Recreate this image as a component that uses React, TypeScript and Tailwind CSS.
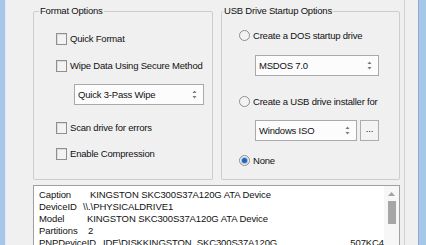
import React from 'react';

const font = { fontFamily: '"Liberation Sans", Arial, sans-serif' };

function UpDown() {
  return (
    <svg width="5" height="9" viewBox="0 0 5 9" className="shrink-0">
      <path d="M2.5 0.5 L4.5 3 H0.5 Z" fill="#7a7a7a" />
      <path d="M2.5 8.5 L4.5 6 H0.5 Z" fill="#7a7a7a" />
    </svg>
  );
}

function Check({ label, className = '' }: { label: string; className?: string }) {
  return (
    <div className={`flex h-[12px] items-center gap-[3px] ${className}`}>
      <div className="h-[12px] w-[11px] shrink-0 border border-[#8e8f8f] bg-[#f3f3f3] shadow-[inset_1px_1px_0_#dcdcdc]" />
      <span className="whitespace-nowrap">{label}</span>
    </div>
  );
}

function Radio({ label, checked = false, className = '' }: { label: string; checked?: boolean; className?: string }) {
  return (
    <div className={`flex h-[11px] items-center gap-[3px] ${className}`}>
      <div className="flex h-[11px] w-[11px] shrink-0 items-center justify-center rounded-full border border-[#8e8f8f] bg-[#f3f3f3]">
        {checked && <div className="h-[5px] w-[5px] rounded-full bg-[#2461b8] shadow-[0_0_0_1px_#9cc0ea]" />}
      </div>
      <span className="whitespace-nowrap">{label}</span>
    </div>
  );
}

function Combo({ value, className = '' }: { value: string; className?: string }) {
  return (
    <div className={`flex h-[21px] items-center justify-between border border-[#a9a9a9] bg-[#fcfcfc] pl-[3px] pr-[6px] ${className}`}>
      <span className="whitespace-nowrap">{value}</span>
      <UpDown />
    </div>
  );
}

const rows = [
  { k: 'Caption', w: 'w-[51px]', v: 'KINGSTON SKC300S37A120G ATA Device' },
  { k: 'DeviceID', w: 'w-[44px]', v: '\\\\.\\PHYSICALDRIVE1' },
  { k: 'Model', w: 'w-[48px]', v: 'KINGSTON SKC300S37A120G ATA Device' },
  { k: 'Partitions', w: 'w-[49px]', v: '2' },
  { k: 'PNPDeviceID', w: 'w-[64px]', v: 'IDE\\DISKKINGSTON_SKC300S37A120G' },
];

export default function App() {
  return (
    <div
      className="flex h-[245px] w-[426px] overflow-hidden bg-[#f0f0f0] text-[9.5px] leading-[12px] tracking-[-0.2px] text-[#111]"
      style={font}
    >
      <div className="w-[5px] shrink-0 bg-[#a7c7ea]" />
      <div className="w-px shrink-0 bg-[#dfe9f4]" />

      <div className="flex w-[399px] shrink-0 flex-col border-r border-[#d2d2d2] pl-[27px] pt-[5px]">
        <div className="flex gap-[8px]">
          <fieldset className="h-[175px] w-[180px] rounded-[2px] border border-[#cdcdcd]">
            <legend className="ml-[5px] px-[1px] leading-[12px]">Format Options</legend>
            <div className="flex flex-col items-start pl-[22px]">
              <Check label="Quick Format" className="mt-[16px]" />
              <Check label="Wipe Data Using Secure Method" className="mt-[15px]" />
              <Combo value="Quick 3-Pass Wipe" className="ml-[18px] mt-[12px] w-[130px]" />
              <Check label="Scan drive for errors" className="mt-[17px]" />
              <Check label="Enable Compression" className="mt-[14px]" />
            </div>
          </fieldset>

          <fieldset className="h-[175px] w-[179px] rounded-[2px] border border-[#cdcdcd]">
            <legend className="ml-[1px] px-[1px] leading-[12px]">USB Drive Startup Options</legend>
            <div className="flex flex-col items-start pl-[17px]">
              <Radio label="Create a DOS startup drive" className="mt-[13px]" />
              <Combo value="MSDOS 7.0" className="ml-[16px] mt-[14px] w-[124px]" />
              <Radio label="Create a USB drive installer for" className="mt-[20px]" />
              <div className="ml-[16px] mt-[13px] flex gap-[3px]">
                <Combo value="Windows ISO" className="w-[102px]" />
                <div className="flex h-[21px] w-[19px] items-center justify-center border border-[#adadad] bg-[#f3f3f3] pb-[3px]">
                  ...
                </div>
              </div>
              <Radio label="None" checked className="mt-[14px]" />
            </div>
          </fieldset>
        </div>

        <div className="mt-[5px] flex h-[70px] w-[367px] shrink-0 border border-[#a0a0a0] bg-white">
          <div className="flex-1 overflow-hidden pl-[5px] pt-[3px] tracking-[-0.1px]">
            {rows.map((r) => (
              <div key={r.k} className="flex h-[12px] whitespace-nowrap">
                <span className={`${r.w} shrink-0`}>{r.k}</span>
                <span>{r.v}</span>
                {r.k === 'PNPDeviceID' && <span className="ml-auto pl-2">507KC4</span>}
              </div>
            ))}
          </div>
          <div className="flex w-[15px] shrink-0 flex-col items-center bg-[#f7f7f7]">
            <svg width="7" height="4" viewBox="0 0 7 4" className="mt-[6px]">
              <path d="M3.5 0 L7 4 H0 Z" fill="#a3a3a3" />
            </svg>
            <div className="mt-[5px] h-[23px] w-[8px] bg-[#a6a6a6]" />
          </div>
        </div>
      </div>

      <div className="w-[13px] shrink-0" />
      <div className="w-[8px] shrink-0 border-l border-[#8eabc9] bg-[#a7c7ea]" />
    </div>
  );
}
